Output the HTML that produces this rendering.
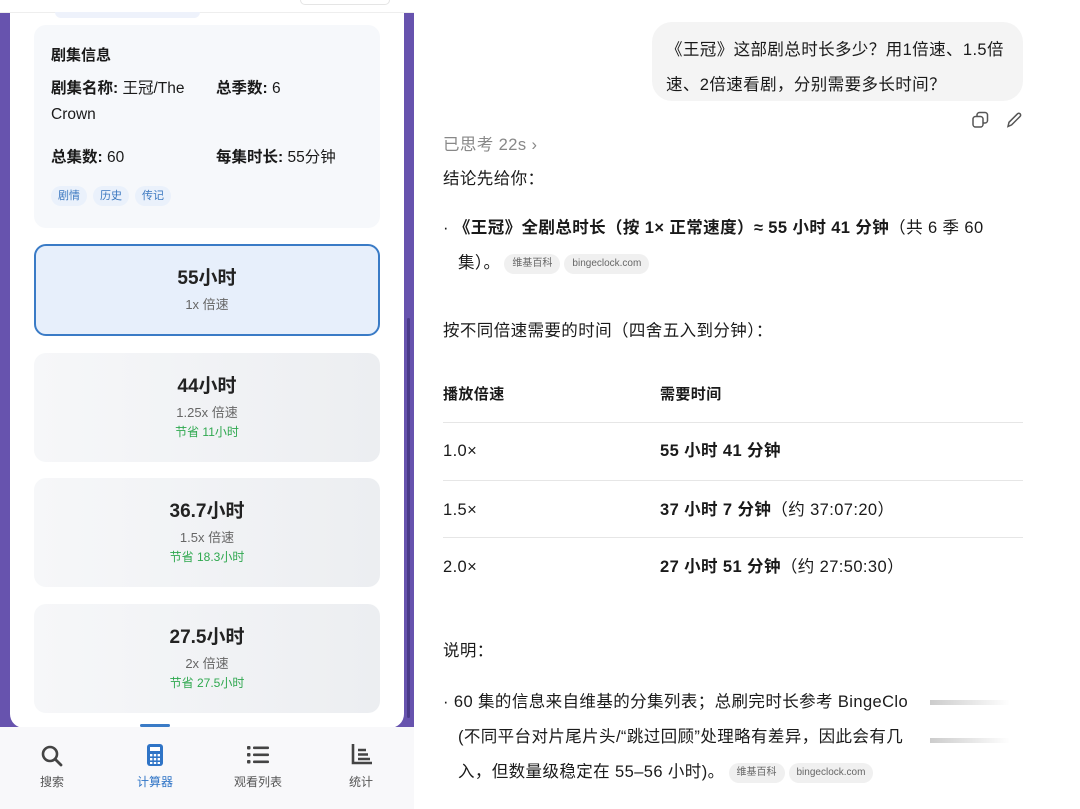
<!DOCTYPE html>
<html><head><meta charset="utf-8"><style>
*{margin:0;padding:0;box-sizing:border-box}
body{width:1080px;height:809px;position:relative;background:#fff;font-family:"Liberation Sans","Noto Sans CJK SC",sans-serif;color:#1a1a1a;overflow:hidden}
.a{position:absolute;white-space:nowrap}
.purple{position:absolute;left:0;top:12px;width:414px;height:716px;background:#6753ae}
.phone{position:absolute;left:10px;top:0;width:394px;height:728px;background:#fff;border-radius:0 0 14px 14px}
.card{position:absolute;left:34px;width:346px;border-radius:12px;background:linear-gradient(90deg,#f6f7f9,#eceef1);text-align:center}
.card .h{font-size:19px;font-weight:bold;color:#222;margin-top:21px;line-height:26px}
.card .s{font-size:13px;color:#666;margin-top:4px;line-height:18px}
.card .g{font-size:12px;color:#2fa84f;margin-top:2px;line-height:16px}
.tag{display:inline-block;font-size:11px;color:#3b78c0;background:#eaf1fb;border-radius:10px;padding:3px 7px;margin-right:6px;line-height:14px}
.chip{display:inline-block;font-size:10px;color:#666;background:#f0f0f0;border-radius:10px;padding:3px 8px;margin-left:4px;vertical-align:2px;font-weight:normal;line-height:14px;letter-spacing:0}
.nav{position:absolute;top:727px;left:0;width:414px;height:82px;background:#f8f8fa}
.ni{position:absolute;top:46px;font-size:12px;color:#555;width:60px;text-align:center}
.t{font-size:16.5px;color:#1a1a1a;letter-spacing:0.4px;line-height:22px}
.line{position:absolute;left:443px;width:580px;height:1px;background:#e6e6e6}
</style></head><body>
<div class="purple"></div>
<div class="phone"></div>
<div class="a" style="left:0;top:0;width:414px;height:13px;background:#fff;border-bottom:1px solid #eee"></div>
<div class="a" style="left:300px;top:0;width:90px;height:5px;border:1px solid #e5e5e5;border-top:none;border-radius:0 0 8px 8px"></div>
<div class="a" style="left:55px;top:12px;width:145px;height:6px;background:#eef2fb;border-radius:0 0 10px 10px"></div>

<div class="a" style="left:34px;top:25px;width:346px;height:203px;background:#f6f8fb;border-radius:12px"></div>
<div class="a" style="left:51px;top:44px;font-size:15px;font-weight:bold">剧集信息</div>
<div class="a" style="left:51px;top:76px;font-size:15.5px;line-height:26px"><b>剧集名称:</b> 王冠/The<br>Crown</div>
<div class="a" style="left:216px;top:76px;font-size:15.5px;line-height:26px"><b>总季数:</b> 6</div>
<div class="a" style="left:51px;top:145px;font-size:15.5px"><b>总集数:</b> 60</div>
<div class="a" style="left:216px;top:145px;font-size:15.5px"><b>每集时长:</b> 55分钟</div>
<div class="a" style="left:51px;top:186px"><span class="tag">剧情</span><span class="tag">历史</span><span class="tag">传记</span></div>

<div class="card" style="top:244px;height:92px;background:#e7effb;border:2px solid #3a7bc6"><div class="h" style="margin-top:20px">55小时</div><div class="s">1x 倍速</div></div>
<div class="card" style="top:353px;height:109px"><div class="h">44小时</div><div class="s">1.25x 倍速</div><div class="g">节省 11小时</div></div>
<div class="card" style="top:478px;height:109px"><div class="h">36.7小时</div><div class="s">1.5x 倍速</div><div class="g">节省 18.3小时</div></div>
<div class="card" style="top:604px;height:109px"><div class="h">27.5小时</div><div class="s">2x 倍速</div><div class="g">节省 27.5小时</div></div>
<div class="a" style="left:407px;top:318px;width:3px;height:400px;background:#4a3a8a;border-radius:2px"></div>

<div class="nav">
<div class="a" style="left:140px;top:-3px;width:30px;height:3px;background:#3a7bc6;border-radius:2px"></div>
<svg class="a" style="left:40px;top:17px" width="24" height="24" viewBox="0 0 24 24"><circle cx="10" cy="10" r="7" fill="none" stroke="#444" stroke-width="2.6"/><path d="M15 15l6 6" stroke="#444" stroke-width="2.8" stroke-linecap="round"/></svg>
<div class="ni" style="left:22px">搜索</div>
<svg class="a" style="left:146px;top:16px" width="18" height="24" viewBox="0 0 18 24"><rect x="1" y="1" width="16" height="22" rx="3" fill="#2f74c6"/><rect x="4" y="4" width="10" height="4" fill="#fff"/><g fill="#fff"><rect x="4" y="11" width="2.4" height="2.4"/><rect x="7.8" y="11" width="2.4" height="2.4"/><rect x="11.6" y="11" width="2.4" height="2.4"/><rect x="4" y="15" width="2.4" height="2.4"/><rect x="7.8" y="15" width="2.4" height="2.4"/><rect x="11.6" y="15" width="2.4" height="2.4"/><rect x="4" y="19" width="2.4" height="2"/><rect x="7.8" y="19" width="2.4" height="2"/><rect x="11.6" y="19" width="2.4" height="2"/></g></svg>
<div class="ni" style="left:125px;color:#2f74c6">计算器</div>
<svg class="a" style="left:247px;top:18px" width="22" height="20" viewBox="0 0 22 20"><g fill="#444"><rect x="0" y="1" width="3.5" height="3.5" rx="1"/><rect x="0" y="8" width="3.5" height="3.5" rx="1"/><rect x="0" y="15" width="3.5" height="3.5" rx="1"/><rect x="6" y="1.5" width="16" height="2.6" rx="1"/><rect x="6" y="8.5" width="16" height="2.6" rx="1"/><rect x="6" y="15.5" width="16" height="2.6" rx="1"/></g></svg>
<div class="ni" style="left:228px">观看列表</div>
<svg class="a" style="left:351px;top:16px" width="22" height="22" viewBox="0 0 22 22"><path d="M2 1v19h19" fill="none" stroke="#444" stroke-width="2.6"/><path d="M7 7h8M7 11.5h10M7 16h12" stroke="#444" stroke-width="2.4"/></svg>
<div class="ni" style="left:331px">统计</div>
</div>

<div class="a" style="left:652px;top:22px;width:371px;height:79px;background:#f4f4f4;border-radius:20px"></div>
<div class="a t" style="left:666px;top:33px;line-height:35px">《王冠》这部剧总时长多少？用1倍速、1.5倍<br>速、2倍速看剧，分别需要多长时间？</div>
<svg class="a" style="left:971px;top:111px" width="18" height="18" viewBox="0 0 18 18" fill="none" stroke="#555" stroke-width="1.5"><rect x="2" y="5.5" width="10" height="10.5" rx="2.5"/><path d="M6 5.5V4a2.5 2.5 0 0 1 2.5-2.5H14A2.5 2.5 0 0 1 16.5 4v5.5A2.5 2.5 0 0 1 14 12h-2"/></svg>
<svg class="a" style="left:1005px;top:111px" width="18" height="18" viewBox="0 0 18 18" fill="none" stroke="#555" stroke-width="1.5"><path d="M3 15.5l1-4.2L12.5 2.8a1.8 1.8 0 0 1 2.6 2.6L6.6 13.9z"/></svg>
<div class="a t" style="left:443px;top:134px;color:#888">已思考 22s ›</div>
<div class="a t" style="left:443px;top:168px">结论先给你：</div>
<div class="a t" style="left:443px;top:211px;line-height:35px">· <b>《王冠》全剧总时长（按 1× 正常速度）≈ 55 小时 41 分钟</b>（共 6 季 60<br>&nbsp;&nbsp;&nbsp;集）。<span class="chip">维基百科</span><span class="chip">bingeclock.com</span></div>
<div class="a t" style="left:443px;top:320px">按不同倍速需要的时间（四舍五入到分钟）：</div>
<div class="a t" style="left:443px;top:384px;font-size:15px;font-weight:bold">播放倍速</div>
<div class="a t" style="left:660px;top:384px;font-size:15px;font-weight:bold">需要时间</div>
<div class="line" style="top:422px"></div>
<div class="a t" style="left:443px;top:440px">1.0×</div>
<div class="a t" style="left:660px;top:440px"><b>55 小时 41 分钟</b></div>
<div class="line" style="top:480px"></div>
<div class="a t" style="left:443px;top:499px">1.5×</div>
<div class="a t" style="left:660px;top:499px"><b>37 小时 7 分钟</b>（约 37:07:20）</div>
<div class="line" style="top:537px"></div>
<div class="a t" style="left:443px;top:556px">2.0×</div>
<div class="a t" style="left:660px;top:556px"><b>27 小时 51 分钟</b>（约 27:50:30）</div>
<div class="a t" style="left:443px;top:640px">说明：</div>
<div class="a t" style="left:443px;top:685px;line-height:35px">· 60 集的信息来自维基的分集列表；总刷完时长参考 BingeClo<br>&nbsp;&nbsp;&nbsp;(不同平台对片尾片头/“跳过回顾”处理略有差异，因此会有几<br>&nbsp;&nbsp;&nbsp;入，但数量级稳定在 55–56 小时)。<span class="chip">维基百科</span><span class="chip">bingeclock.com</span></div>
<div class="a" style="left:928px;top:688px;width:100px;height:60px;background:linear-gradient(90deg,rgba(255,255,255,0),#fff 30%)"></div>
<div class="a" style="left:930px;top:700px;width:80px;height:5px;background:linear-gradient(90deg,#ccc,rgba(255,255,255,0))"></div>
<div class="a" style="left:930px;top:738px;width:80px;height:5px;background:linear-gradient(90deg,#ccc,rgba(255,255,255,0))"></div>
</body></html>
